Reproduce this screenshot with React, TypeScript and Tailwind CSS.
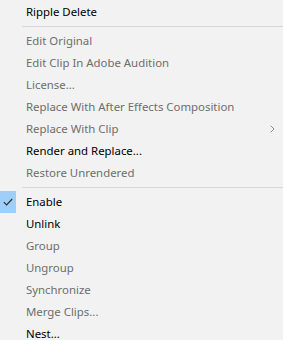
import React from "react";

type Item =
  | { kind: "sep" }
  | { kind: "item"; label: string; disabled?: boolean; checked?: boolean; submenu?: boolean };

const items: Item[] = [
  { kind: "item", label: "Ripple Delete" },
  { kind: "sep" },
  { kind: "item", label: "Edit Original", disabled: true },
  { kind: "item", label: "Edit Clip In Adobe Audition", disabled: true },
  { kind: "item", label: "License...", disabled: true },
  { kind: "item", label: "Replace With After Effects Composition", disabled: true },
  { kind: "item", label: "Replace With Clip", disabled: true, submenu: true },
  { kind: "item", label: "Render and Replace..." },
  { kind: "item", label: "Restore Unrendered", disabled: true },
  { kind: "sep" },
  { kind: "item", label: "Enable", checked: true },
  { kind: "item", label: "Unlink" },
  { kind: "item", label: "Group", disabled: true },
  { kind: "item", label: "Ungroup", disabled: true },
  { kind: "item", label: "Synchronize", disabled: true },
  { kind: "item", label: "Merge Clips...", disabled: true },
  { kind: "item", label: "Nest..." },
];

function Check() {
  return (
    <svg width="10" height="8" viewBox="0 0 10 8" fill="none">
      <path d="M0.8 4.2 L3.6 7 L9.2 1" stroke="#2b2b2b" strokeWidth="1.1" />
    </svg>
  );
}

function Chevron() {
  return (
    <svg width="5" height="8" viewBox="0 0 5 8" fill="none">
      <path d="M0.8 0.8 L4 4 L0.8 7.2" stroke="#8a8a8a" strokeWidth="1" />
    </svg>
  );
}

export default function App() {
  return (
    <div
      className="w-[283px] h-[340px] overflow-hidden bg-[#f2f2f2] pt-px text-[11.4px]"
      style={{ fontFamily: '"Noto Sans", "Segoe UI", sans-serif' }}
    >
      {items.map((it, i) =>
        it.kind === "sep" ? (
          <div key={i} className="pl-[22px] py-[3px]">
            <div className="h-px bg-[#d7d7d7]" />
          </div>
        ) : (
          <div key={i} className="flex h-[22px] items-center">
            <div
              className={
                "flex h-[22px] w-4 items-center justify-center " +
                (it.checked ? "bg-[#9fcff9]" : "")
              }
            >
              {it.checked && <Check />}
            </div>
            <span
              className={
                "ml-[10px] flex-1 whitespace-nowrap leading-none " +
                (it.disabled ? "text-[#6d6d6d]" : "text-black")
              }
            >
              {it.label}
            </span>
            {it.submenu && (
              <span className="mr-[8px] flex items-center">
                <Chevron />
              </span>
            )}
          </div>
        )
      )}
    </div>
  );
}
